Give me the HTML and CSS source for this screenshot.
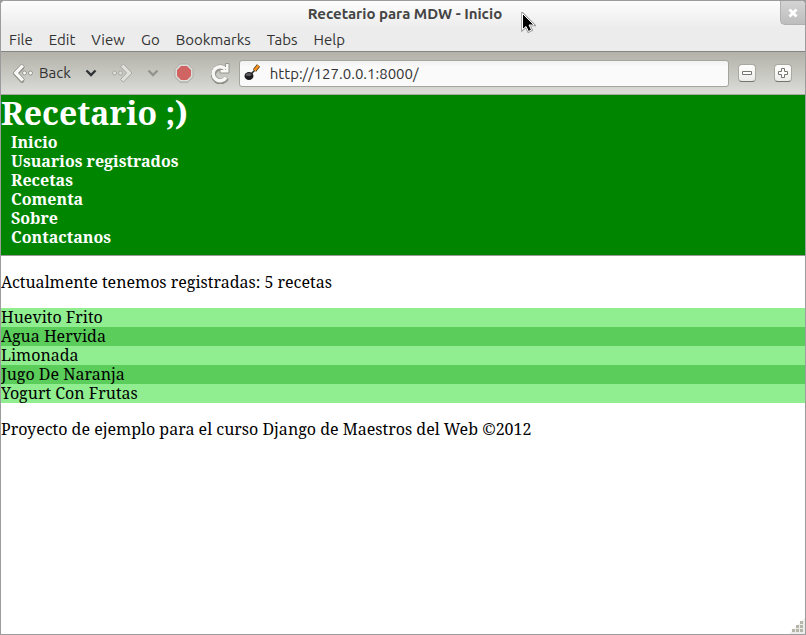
FILE: index.html
```html
<!DOCTYPE html>
<html lang="es">

<head>
  <meta charset="UTF-8">
  <meta name="viewport" content="width=device-width, initial-scale=1.0">
  <title>Recetario para MDW - Inicio</title>
  <link rel="stylesheet" href="styles.css">
</head>

<body>
  <div class="window">
    <div class="titlebar">
      <span>Recetario para MDW - Inicio</span>
      <button type="button" class="close" aria-label="Close">
        <svg width="10" height="10" viewBox="0 0 10 10"><path d="M1.5 1.5l7 7M8.5 1.5l-7 7" stroke="#fff" stroke-width="2.8"/></svg>
      </button>
    </div>

    <div class="menubar">
      <button type="button">File</button>
      <button type="button">Edit</button>
      <button type="button">View</button>
      <button type="button">Go</button>
      <button type="button">Bookmarks</button>
      <button type="button">Tabs</button>
      <button type="button">Help</button>
    </div>

    <div class="toolbar">
      <button type="button" class="back">
        <svg width="22" height="22" viewBox="0 0 22 22">
          <path d="M10 5.500L4 12l6 6.500" fill="none" stroke="#8b8b84" stroke-width="4.500" stroke-linecap="round"/>
          <g fill="#f7f7f5" stroke="#96968f">
            <path d="M9.500 2l3 2.500L6.500 11l6 6.500-3 2.500L1 11z" stroke-linejoin="round"/>
            <circle cx="12.500" cy="11" r="2"/>
            <circle cx="18.500" cy="11" r="2"/>
          </g>
        </svg>
        <span>Back</span>
      </button>
      <button type="button" class="arrow" aria-label="Back history">
        <svg width="12" height="8" viewBox="0 0 12 8"><path d="M1.5 1.5L6 6l4.500-4.500" fill="none" stroke="#2e3436" stroke-width="2.400"/></svg>
      </button>
      <button type="button" class="forward" aria-label="Forward" disabled>
        <svg width="22" height="22" viewBox="0 0 22 22">
          <g fill="#dfdfdb" stroke="#a9a9a2">
            <path d="M12.500 2l-3 2.500 6 6.500-6 6.500 3 2.500L21 11z" stroke-linejoin="round"/>
            <circle cx="3.500" cy="11" r="2"/>
            <circle cx="9.500" cy="11" r="2"/>
          </g>
        </svg>
      </button>
      <button type="button" class="arrow" aria-label="Forward history" disabled>
        <svg width="12" height="8" viewBox="0 0 12 8"><path d="M1.5 1.5L6 6l4.500-4.500" fill="none" stroke="#94948e" stroke-width="2.400"/></svg>
      </button>
      <button type="button" class="stop" aria-label="Stop">
        <svg width="22" height="22" viewBox="0 0 22 22">
          <path d="M7 2.500h8l5 5v8l-5 5H7l-5-5v-8z" fill="#a0a09a"/>
          <path d="M7.200 2h7.600l5.200 5.200v7.600L14.800 20H7.200L2 14.800V7.200z" fill="#dcdcd8" stroke="#adada7"/>
          <path d="M8 4h6l4 4v6l-4 4H8l-4-4V8z" fill="#cf6463"/>
        </svg>
      </button>
      <button type="button" class="reload" aria-label="Reload">
        <svg width="22" height="22" viewBox="0 0 22 22">
          <g fill="none" stroke="#8b8b84" stroke-width="5">
            <path d="M15.500 6.200A7 7 0 1 0 17.500 15.500" transform="translate(0 1)"/>
            <path d="M15.500 6.200A7 7 0 1 0 17.500 15.500" stroke="#96968f"/>
          </g>
          <path d="M16.500 1.500H20V11h-9V7.500h5.500z" fill="#f7f7f5" stroke="#96968f"/>
          <path d="M16.500 7.200A7 7 0 1 0 17 15.500" fill="none" stroke="#f7f7f5" stroke-width="3.400"/>
        </svg>
      </button>
      <label class="address">
        <svg width="18" height="18" viewBox="0 0 18 18">
          <path d="M6 11l6-6" stroke="#222" stroke-width="1.500"/>
          <path d="M10.500 6.500L14.500 1.500" stroke="#3a2a10" stroke-width="4"/>
          <path d="M10.500 6.500L14.500 1.500" stroke="#f79320" stroke-width="2.800"/>
          <ellipse cx="5" cy="12" rx="4.500" ry="4" fill="#1c1c1e"/>
          <ellipse cx="4.500" cy="10.500" rx="3" ry="1.500" fill="#5a5a60"/>
        </svg>
        <input type="text" value="http://127.0.0.1:8000/" aria-label="Address">
      </label>
      <button type="button" class="zoom" aria-label="Zoom out">
        <svg width="12" height="12" viewBox="0 0 12 12"><path d="M1.500 4.500h9v3h-9z" fill="#fff" stroke="#777770"/></svg>
      </button>
      <button type="button" class="zoom" aria-label="Zoom in">
        <svg width="12" height="12" viewBox="0 0 12 12"><path d="M4.500 1.500h3v3h3v3h-3v3h-3v-3h-3v-3h3z" fill="#fff" stroke="#777770"/></svg>
      </button>
    </div>

    <div class="page">
      <header>
        <h1>Recetario ;)</h1>
        <nav>
          <ul>
            <li><a href="#">Inicio</a></li>
            <li><a href="#">Usuarios registrados</a></li>
            <li><a href="#">Recetas</a></li>
            <li><a href="#">Comenta</a></li>
            <li><a href="#">Sobre</a></li>
            <li><a href="#">Contactanos</a></li>
          </ul>
        </nav>
      </header>
      <p>Actualmente tenemos registradas: 5 recetas</p>
      <ul class="recetas">
        <li>Huevito Frito</li>
        <li>Agua Hervida</li>
        <li>Limonada</li>
        <li>Jugo De Naranja</li>
        <li>Yogurt Con Frutas</li>
      </ul>
      <footer>
        <p>Proyecto de ejemplo para el curso Django de Maestros del Web ©2012</p>
      </footer>
    </div>

    <svg class="grip" width="16" height="16" viewBox="0 0 16 16">
      <path d="M16 0v16H0z" fill="#ededeb"/>
      <path d="M11 3h3v3h-3zM7 7h3v3H7zM11 7h3v3h-3zM3 11h3v3H3zM7 11h3v3H7zM11 11h3v3h-3z" fill="#b5b5aa"/>
    </svg>
  </div>

  <svg class="pointer" width="15" height="21" viewBox="0 0 15 21">
    <path d="M1.500 1.500v16l3.500-3 2.500 5 3-1.500-2.500-5h5z" fill="#000" stroke="#999" stroke-width="2.600"/>
    <path d="M1.500 1.500v16l3.500-3 2.500 5 3-1.500-2.500-5h5z" fill="#000" stroke="#fff"/>
  </svg>
</body>

</html>
```
FILE: styles.css
```css
* {
  box-sizing: border-box;
}

body {
  margin: 0;
  background: #999;
}

button {
  padding: 0;
  border: 0;
  background: none;
  color: #333;
  font: inherit;
}

svg {
  display: block;
}

.window {
  position: relative;
  display: flex;
  flex-direction: column;
  min-height: 100vh;
  border: 1px solid #9c9c9c;
  border-radius: 5px 5px 0 0;
  background: #fff;
  overflow: hidden;
  color: #333;
  font-family: Ubuntu, "Noto Sans", sans-serif;
  font-size: 15px;
}

/* window frame */

.titlebar {
  display: flex;
  justify-content: center;
  height: 27px;
  padding-left: 4px;
  background: linear-gradient(#fdfdfd, #ececec);
  color: #444;
  line-height: 26px;
  font-weight: bold;
}

.close {
  position: absolute;
  top: 0;
  right: 0;
  display: grid;
  place-items: center;
  width: 25px;
  height: 24px;
  border: solid #b0b0b0;
  border-width: 0 0 1px 1px;
  border-radius: 0 0 0 5px;
  background: linear-gradient(#d4d4d4, #bdbdbd);
}

.menubar {
  display: flex;
  gap: 16px;
  height: 24px;
  padding: 0 8px;
  border-bottom: 1px solid #858585;
  background: #ececec;
}

.toolbar {
  display: flex;
  align-items: center;
  height: 43px;
  padding: 0 13px 0 11px;
  border-bottom: 1px solid #a8a8a4;
  background: linear-gradient(#b2b2a9, #dcdcd9);
}

.back {
  display: flex;
  align-items: center;
  gap: 5px;
  line-height: 20px;
}

.arrow {
  padding: 0 14px;
}

.stop {
  margin-right: 14px;
}

.address {
  display: flex;
  flex: 1;
  align-items: center;
  gap: 8px;
  height: 27px;
  margin-left: 8px;
  padding: 0 4px;
  border: 1px solid #a5a59d;
  border-radius: 3px;
  background: linear-gradient(#f1f1f1, #fafafa 6px);
}

.address input {
  flex: 1;
  min-width: 0;
  padding: 0;
  border: 0;
  outline: 0;
  background: none;
  color: #333;
  font: inherit;
}

.zoom {
  display: grid;
  place-items: center;
  width: 18px;
  height: 18px;
  margin-left: 9px;
  border: 1px solid #a9a9a2;
  border-bottom-color: #74746e;
  border-radius: 4px;
  background: linear-gradient(#fff, #ecece9);
}

.zoom + .zoom {
  margin-left: 18px;
}

/* page */

.page {
  flex: 1;
  color: #000;
  font-family: "Droid Serif", "Noto Serif", "DejaVu Serif", serif;
  font-size: 16px;
  line-height: 19px;
}

.page header {
  padding-bottom: 8px;
  border-bottom: 1px solid #999;
  background: #008500;
}

h1 {
  margin: 0;
  padding-bottom: 2px;
  color: #fff;
  font-size: 32px;
  line-height: 36px;
}

ul {
  margin: 0;
  padding: 0;
  list-style: none;
}

nav {
  padding-left: 10px;
  font-weight: bold;
}

nav a {
  color: #fff;
  text-decoration: none;
}

.page p {
  margin: 17px 0 16px;
}

.recetas li {
  background: #90ee90;
}

.recetas li:nth-child(even) {
  background: #5acd5a;
}

.grip {
  position: absolute;
  right: 0;
  bottom: 0;
}

.pointer {
  position: absolute;
  top: 12px;
  left: 521px;
}
```
